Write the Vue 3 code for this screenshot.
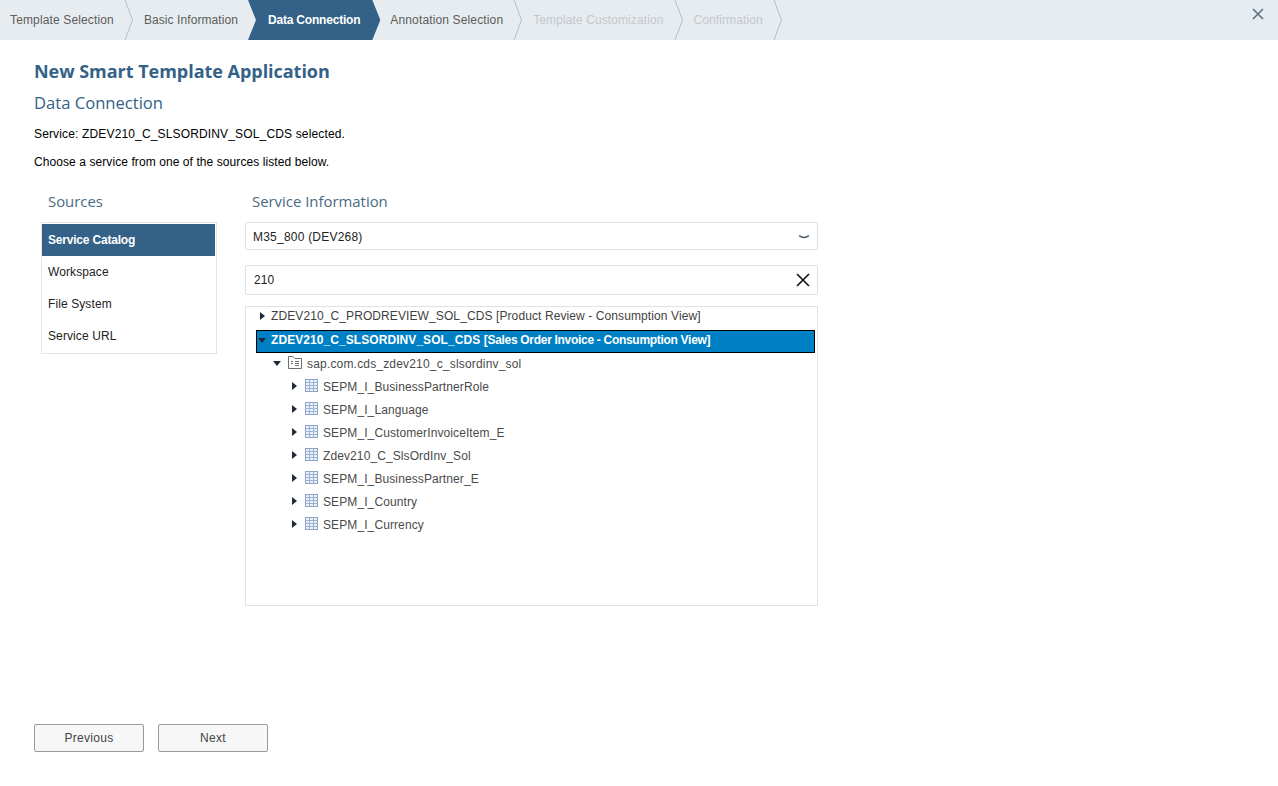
<script setup>
const steps = [
  { label: 'Template Selection', state: 'done' },
  { label: 'Basic Information', state: 'before' },
  { label: 'Data Connection', state: 'active' },
  { label: 'Annotation Selection', state: 'done' },
  { label: 'Template Customization', state: 'off' },
  { label: 'Confirmation', state: 'off' }
]
const sources = ['Service Catalog', 'Workspace', 'File System', 'Service URL']
const entities = [
  'SEPM_I_BusinessPartnerRole',
  'SEPM_I_Language',
  'SEPM_I_CustomerInvoiceItem_E',
  'Zdev210_C_SlsOrdInv_Sol',
  'SEPM_I_BusinessPartner_E',
  'SEPM_I_Country',
  'SEPM_I_Currency'
]
</script>

<template>
  <div class="page">
    <header class="bar">
      <nav class="steps">
        <div v-for="s in steps" :key="s.label" class="step" :class="s.state">
          <span>{{ s.label }}</span>
          <svg v-if="s.state !== 'active' && s.state !== 'before'" class="chev" width="10" height="40" viewBox="0 0 10 40">
            <path d="M1 0L8.5 20L1 40" fill="none" stroke="#b9bec3" stroke-width="1" />
          </svg>
        </div>
      </nav>
      <button class="close" aria-label="Close">
        <svg width="12" height="12" viewBox="0 0 12 12">
          <path d="M1 1L11 11M11 1L1 11" stroke="#5d7080" stroke-width="1.6" fill="none" />
        </svg>
      </button>
    </header>

    <main class="content">
      <h1>New Smart Template Application</h1>
      <h2>Data Connection</h2>
      <p class="first">Service: ZDEV210_C_SLSORDINV_SOL_CDS selected.</p>
      <p class="second">Choose a service from one of the sources listed below.</p>

      <div class="columns">
        <section class="left">
          <h3>Sources</h3>
          <ul class="sources">
            <li v-for="(s, i) in sources" :key="s" :class="{ sel: i === 0 }">{{ s }}</li>
          </ul>
        </section>

        <section class="right">
          <h3>Service Information</h3>
          <div class="field select">
            <span>M35_800 (DEV268)</span>
            <svg width="12" height="6" viewBox="0 0 12 6">
              <path d="M1 1.5Q6 5.5 11 1.5" fill="none" stroke="#4b5a68" stroke-width="1.4" />
            </svg>
          </div>
          <div class="field search">
            <span>210</span>
            <svg width="14" height="14" viewBox="0 0 14 14">
              <path d="M1 1L13 13M13 1L1 13" stroke="#111" stroke-width="1.6" fill="none" />
            </svg>
          </div>
          <div class="tree">
            <div class="row r0 top">
              <i class="tri closed"></i>
              <span>ZDEV210_C_PRODREVIEW_SOL_CDS [Product Review - Consumption View]</span>
            </div>
            <div class="row r0 selected">
              <i class="tri open dark"></i>
              <span><span class="name">ZDEV210_C_SLSORDINV_SOL_CDS</span> <span class="desc">[Sales Order Invoice - Consumption View]</span></span>
            </div>
            <div class="row r1">
              <i class="tri open"></i>
              <svg class="ico" width="14" height="13" viewBox="0 0 14 13">
                <path d="M.5 12.5V.5H5L7 2.5H13.5V12.5Z" fill="#fff" stroke="#6b6f73" />
                <path d="M7 5.5H11M7 7.5H11M7 9.5H11M3 5.5H5M3 7.5H5" stroke="#6b6f73" />
              </svg>
              <span>sap.com.cds_zdev210_c_slsordinv_sol</span>
            </div>
            <div v-for="e in entities" :key="e" class="row r2">
              <i class="tri closed"></i>
              <svg class="ico" width="13" height="13" viewBox="0 0 13 13">
                <rect x=".5" y=".5" width="12" height="12" fill="#eaf0f9" stroke="#8ca3c6" />
                <path d="M.5 3.5H12.5M.5 6.5H12.5M.5 9.5H12.5M4.5 .5V12.5M8.5 .5V12.5" stroke="#9db3d3" />
              </svg>
              <span>{{ e }}</span>
            </div>
          </div>
        </section>
      </div>

      <footer class="actions">
        <button>Previous</button>
        <button>Next</button>
      </footer>
    </main>
  </div>
</template>

<style>
html, body { margin: 0; background: #fff; }
</style>

<style scoped>
.page {
  height: 786px;
  font-family: "Liberation Sans", Arial, sans-serif;
  font-size: 12px;
  letter-spacing: 0.1px;
  color: #000;
  overflow: hidden;
}
.bar {
  height: 40px;
  background: #e7ecf0;
  display: flex;
  justify-content: space-between;
}
.steps { display: flex; }
.step {
  position: relative;
  display: flex;
  align-items: center;
  padding: 0 20px 0 10px;
  color: #5c5c5c;
  white-space: nowrap;
  letter-spacing: 0.14px;
}
.step.before { padding-right: 10px; letter-spacing: 0.08px; }
.step.active {
  padding: 0 20px;
  background: #346187;
  color: #fff;
  font-weight: 700;
  letter-spacing: -0.2px;
  clip-path: polygon(0 0, calc(100% - 8px) 0, 100% 50%, calc(100% - 8px) 100%, 0 100%, 8px 50%);
}
.step.off { color: #c4c8cc; letter-spacing: 0.1px; }
.chev { position: absolute; right: 0; top: 0; }
.close {
  width: 40px;
  height: 30px;
  padding: 0;
  border: 0;
  background: none;
}
.content { padding: 0 34px; }
h1 {
  margin: 0;
  padding-top: 18px;
  font: 700 18px/27px "Open Sans", sans-serif;
  letter-spacing: -0.03px;
  color: #346187;
}
h2 {
  margin: 0;
  padding-top: 6px;
  font: 400 16.6px/24px "Open Sans", sans-serif;
  letter-spacing: 0;
  color: #346187;
}
p { margin: 0; line-height: 14px; }
.first { padding-top: 12px; letter-spacing: 0.15px; }
.second { padding-top: 14px; letter-spacing: 0.08px; }
h3 {
  margin: 0;
  font: 400 14.9px/20px "Open Sans", sans-serif;
  letter-spacing: 0;
  color: #4a6a82;
}
.columns {
  display: flex;
  padding-top: 22px;
}
.left { width: 176px; margin-left: 7px; }
.left h3 { padding-left: 7px; }
.sources {
  list-style: none;
  margin: 11px 0 0;
  padding: 1px 1px 1px 0;
  border: 1px solid #e2e2e2;
}
.sources li {
  height: 32px;
  line-height: 32px;
  padding-left: 6px;
  color: #222;
}
.sources li.sel {
  background: #346187;
  color: #fff;
  font-weight: 700;
  letter-spacing: -0.2px;
}
.right { width: 573px; margin-left: 28px; }
.right h3 { padding-left: 7px; }
.field {
  display: flex;
  align-items: center;
  justify-content: space-between;
  box-sizing: border-box;
  border: 1px solid #e0e0e0;
  border-radius: 2px;
  padding: 0 7px;
  color: #222;
}
.select { height: 28px; margin-top: 11px; padding-top: 1px; letter-spacing: 0.22px; }
.search { height: 30px; margin-top: 15px; padding-left: 8px; }
.tree {
  box-sizing: border-box;
  height: 300px;
  margin-top: 11px;
  border: 1px solid #e2e2e2;
}
.row {
  display: flex;
  align-items: center;
  height: 23px;
  white-space: nowrap;
  color: #4a4a4a;
}
.row.top { height: 18px; color: #3f3f3f; }
.row.top .tri { margin-left: 0; margin-right: 6px; }
.row.r0 { margin-left: 10px; margin-right: 2px; padding-left: 4px; }
.row.r1 { padding-left: 27px; letter-spacing: 0.18px; }
.row.r2 { padding-left: 45px; }
.row.selected {
  box-sizing: border-box;
  background: #0080c4;
  border: 1px solid #000;
  color: #fff;
  font-weight: 700;
  padding: 0 0 3px 1px;
  margin-top: 5px;
  margin-bottom: -1px;
}
.name { letter-spacing: 0.07px; }
.desc { letter-spacing: -0.3px; }
.tri { display: block; flex: none; margin-right: 5px; }
.tri.closed {
  width: 0;
  height: 0;
  margin-left: 1px;
  border-top: 4px solid transparent;
  border-bottom: 4px solid transparent;
  border-left: 5px solid #1f2a3a;
}
.tri.open {
  width: 0;
  height: 0;
  margin-right: 5px;
  border-left: 4.5px solid transparent;
  border-right: 4.5px solid transparent;
  border-top: 5px solid #1f2a3a;
}
.ico { flex: none; margin-right: 5px; margin-bottom: 2px; }
.r1 .ico { margin-left: 2px; }
.r2 .tri.closed { margin-right: 8px; margin-bottom: 1px; }
.actions {
  display: flex;
  gap: 14px;
  padding-top: 118px;
}
.actions button {
  width: 110px;
  height: 28px;
  border: 1px solid #9a9a9a;
  border-radius: 2px;
  background: #f7f7f7;
  color: #444;
  font: 12px "Liberation Sans", Arial, sans-serif;
  letter-spacing: 0.3px;
}
</style>
